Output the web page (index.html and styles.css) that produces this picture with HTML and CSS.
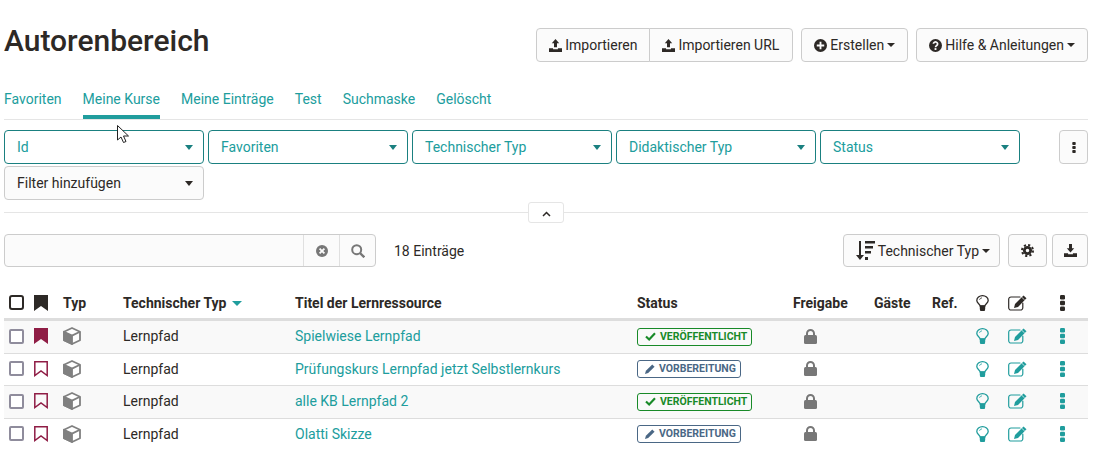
FILE: index.html
```html
<!DOCTYPE html>
<html lang="de">

<head>
  <meta charset="UTF-8">
  <title>Autorenbereich</title>
  <link rel="stylesheet" href="styles.css">
</head>

<body>
  <svg class="defs" width="0" height="0">
    <symbol id="i-upload" viewBox="0 0 14 14">
      <path fill="currentColor" d="M7 0l4 4.6H8.6V9H5.4V4.6H3zM0 10h4.4v1h5.2v-1H14v4H0z" />
    </symbol>
    <symbol id="i-download" viewBox="0 0 14 14">
      <path fill="currentColor" d="M5.4 0h3.2v4.6H11L7 9.2 3 4.6h2.4zM0 10h4.4v1h5.2v-1H14v4H0z" />
    </symbol>
    <symbol id="i-plus" viewBox="0 0 14 14">
      <path fill="currentColor" fill-rule="evenodd" d="M7 0a7 7 0 1 0 0 14A7 7 0 0 0 7 0zM3 6h3V3h2v3h3v2H8v3H6V8H3z" />
    </symbol>
    <symbol id="i-help" viewBox="0 0 14 14">
      <circle cx="7" cy="7" r="7" fill="currentColor" />
      <path fill="none" stroke="#fbfbfb" stroke-width="1.8" d="M4.7 5.2a2.3 2.1 0 1 1 3.6 1.8c-.9.6-1.3.9-1.3 1.9" />
      <rect x="6" y="9.8" width="2" height="2" fill="#fbfbfb" />
    </symbol>
    <symbol id="i-gear" viewBox="0 0 14 14">
      <circle cx="7" cy="7" r="3.4" fill="none" stroke="currentColor" stroke-width="3" />
      <circle cx="7" cy="7" r="5.9" fill="none" stroke="currentColor" stroke-width="2.2" stroke-dasharray="2.32 2.31" />
    </symbol>
    <symbol id="i-sort" viewBox="0 0 19 19">
      <path fill="currentColor" d="M3 0h2v14h3l-4 5-4-5h3zM9 0h10v2.500H9zM9 5h8v2.500H9zM9 10h6v2.500H9zM9 16h3v3H9z" />
    </symbol>
    <symbol id="i-bookmark" viewBox="0 0 14 16">
      <path fill="currentColor" d="M0 0h14v16l-7-5-7 5z" />
    </symbol>
    <symbol id="i-bookmark-o" viewBox="0 0 14 16">
      <path fill="none" stroke="currentColor" stroke-width="1.5" d="M.8.8h12.400v13.700L7 10 .8 14.500z" />
    </symbol>
    <symbol id="i-cube" viewBox="0 0 18 18">
      <path fill="#fff" stroke="#808080" stroke-width="1.800" stroke-linejoin="round" d="M9 1l8 3.700v8.600L9 17l-8-3.700V4.700z" />
      <path fill="#808080" stroke="#808080" stroke-width="1.800" stroke-linejoin="round" d="M1 4.700l8 3.900V17l-8-3.700z" />
      <path fill="none" stroke="#808080" stroke-width="1.800" d="M9 8.600l8-3.900" />
    </symbol>
    <symbol id="i-lock" viewBox="0 0 13 15">
      <path fill="none" stroke="currentColor" stroke-width="2" d="M3 7V4.500a3.500 3.500 0 0 1 7 0V7" />
      <rect y="6" width="13" height="9" rx="1.500" fill="currentColor" />
    </symbol>
    <symbol id="i-bulb" viewBox="0 0 13 16">
      <path fill="none" stroke="currentColor" stroke-width="1.300" d="M4.200 11C3.800 9 .8 8 .8 5.400a5.700 4.700 0 0 1 11.400 0C12.200 8 9.200 9 8.800 11z" />
      <path fill="currentColor" d="M3.800 10.500h5.400v3a2 2.500 0 0 1-5.400 0z" />
      <path fill="none" stroke="currentColor" stroke-width=".8" d="M3.500 4.800a3 2.500 0 0 1 2.500-2" />
    </symbol>
    <symbol id="i-edit" viewBox="0 0 19 16">
      <path fill="none" stroke="currentColor" stroke-width="1.200" stroke-linecap="round" d="M12 2H3A2.300 2.300 0 0 0 .7 4.300v8.400A2.300 2.300 0 0 0 3 15h9.500a2.300 2.300 0 0 0 2.300-2.300V8" />
      <path fill="currentColor" d="M15.500.5l3 2.700L10 12l-4 1 1-4z" />
      <path fill="none" stroke="#fff" stroke-width=".7" d="M13.800 2.300l2.900 2.700" />
    </symbol>
    <symbol id="i-dots" viewBox="0 0 5 16">
      <rect width="5" height="4.400" rx="1.200" fill="currentColor" />
      <rect y="5.800" width="5" height="4.400" rx="1.200" fill="currentColor" />
      <rect y="11.600" width="5" height="4.400" rx="1.200" fill="currentColor" />
    </symbol>
    <symbol id="i-check" viewBox="0 0 12 10">
      <path fill="none" stroke="currentColor" stroke-width="2.400" d="M1 5l3.500 3.300L11 1.500" />
    </symbol>
    <symbol id="i-pencil" viewBox="0 0 11 11">
      <path fill="currentColor" d="M8 .5L10.500 3 3.500 10 0 11l1-3.500z" />
    </symbol>
  </svg>

  <div class="page">
    <header class="top">
      <h1>Autorenbereich</h1>
      <div class="actions">
        <div class="btn-group">
          <button class="btn"><svg class="icon"><use href="#i-upload" /></svg>Importieren</button>
          <button class="btn"><svg class="icon"><use href="#i-upload" /></svg>Importieren URL</button>
        </div>
        <button class="btn"><svg class="icon"><use href="#i-plus" /></svg>Erstellen<span class="caret"></span></button>
        <button class="btn"><svg class="icon"><use href="#i-help" /></svg>Hilfe &amp; Anleitungen<span class="caret"></span></button>
      </div>
    </header>

    <nav class="tabs">
      <a>Favoriten</a>
      <a class="active">Meine Kurse</a>
      <a>Meine Einträge</a>
      <a>Test</a>
      <a>Suchmaske</a>
      <a>Gelöscht</a>
    </nav>

    <section class="filters">
      <div class="filter-grid">
        <button class="filter on">Id<span class="caret"></span></button>
        <button class="filter on">Favoriten<span class="caret"></span></button>
        <button class="filter on">Technischer Typ<span class="caret"></span></button>
        <button class="filter on">Didaktischer Typ<span class="caret"></span></button>
        <button class="filter on">Status<span class="caret"></span></button>
        <button class="filter">Filter hinzufügen<span class="caret"></span></button>
      </div>
      <button class="btn btn-kebab"><svg class="kebab"><use href="#i-dots" /></svg></button>
    </section>

    <div class="divider">
      <button class="collapse"><svg width="9" height="6" viewBox="0 0 9 6"><path fill="none" stroke="#2d2926" stroke-width="1.500" d="M1 5l3.500-3.500L8 5" /></svg></button>
    </div>

    <section class="toolbar">
      <div class="search">
        <div class="search-input"></div>
        <div class="search-btn">
          <svg width="14" height="14" viewBox="0 0 14 14">
            <circle cx="7" cy="7" r="6" fill="#777" />
            <path stroke="#fbfbfb" stroke-width="1.800" d="M4.600 4.600l4.800 4.800M9.400 4.600l-4.800 4.800" />
          </svg>
        </div>
        <div class="search-btn">
          <svg width="14" height="14" viewBox="0 0 14 14">
            <circle cx="5.700" cy="5.700" r="4.500" fill="none" stroke="#777" stroke-width="2" />
            <path stroke="#777" stroke-width="2.400" d="M9 9l4.300 4.300" />
          </svg>
        </div>
      </div>
      <span class="count">18 Einträge</span>
      <div class="tools">
        <button class="btn btn-sort"><svg class="icon-sort"><use href="#i-sort" /></svg>Technischer Typ<span class="caret"></span></button>
        <button class="btn btn-gear"><svg class="icon"><use href="#i-gear" /></svg></button>
        <button class="btn btn-export"><svg class="icon"><use href="#i-download" /></svg></button>
      </div>
    </section>

    <table class="results">
      <thead>
        <tr>
          <th class="c-check"><span class="box box-head"></span></th>
          <th class="c-mark"><svg class="i-mark"><use href="#i-bookmark" /></svg></th>
          <th class="c-type">Typ</th>
          <th class="c-tech">Technischer Typ <span class="caret caret-sort"></span></th>
          <th class="c-title">Titel der Lernressource</th>
          <th class="c-status">Status</th>
          <th class="c-share">Freigabe</th>
          <th class="c-guest">Gäste</th>
          <th class="c-ref">Ref.</th>
          <th class="c-bulb"><svg class="i-bulb"><use href="#i-bulb" /></svg></th>
          <th class="c-edit"><svg class="i-edit"><use href="#i-edit" /></svg></th>
          <th class="c-dots"><svg class="i-dots"><use href="#i-dots" /></svg></th>
        </tr>
      </thead>
      <tbody>
        <tr>
          <td><span class="box"></span></td>
          <td class="mark"><svg class="i-mark"><use href="#i-bookmark" /></svg></td>
          <td><svg class="i-cube"><use href="#i-cube" /></svg></td>
          <td>Lernpfad</td>
          <td><a>Spielwiese Lernpfad</a></td>
          <td><span class="tag tag-ok"><svg class="i-check"><use href="#i-check" /></svg>VERÖFFENTLICHT</span></td>
          <td class="lock"><svg class="i-lock"><use href="#i-lock" /></svg></td>
          <td></td>
          <td></td>
          <td class="act"><svg class="i-bulb"><use href="#i-bulb" /></svg></td>
          <td class="act"><svg class="i-edit"><use href="#i-edit" /></svg></td>
          <td class="act"><svg class="i-dots"><use href="#i-dots" /></svg></td>
        </tr>
        <tr>
          <td><span class="box"></span></td>
          <td class="mark"><svg class="i-mark"><use href="#i-bookmark-o" /></svg></td>
          <td><svg class="i-cube"><use href="#i-cube" /></svg></td>
          <td>Lernpfad</td>
          <td><a>Prüfungskurs Lernpfad jetzt Selbstlernkurs</a></td>
          <td><span class="tag tag-prep"><svg class="i-pencil"><use href="#i-pencil" /></svg>VORBEREITUNG</span></td>
          <td class="lock"><svg class="i-lock"><use href="#i-lock" /></svg></td>
          <td></td>
          <td></td>
          <td class="act"><svg class="i-bulb"><use href="#i-bulb" /></svg></td>
          <td class="act"><svg class="i-edit"><use href="#i-edit" /></svg></td>
          <td class="act"><svg class="i-dots"><use href="#i-dots" /></svg></td>
        </tr>
        <tr>
          <td><span class="box"></span></td>
          <td class="mark"><svg class="i-mark"><use href="#i-bookmark-o" /></svg></td>
          <td><svg class="i-cube"><use href="#i-cube" /></svg></td>
          <td>Lernpfad</td>
          <td><a>alle KB Lernpfad 2</a></td>
          <td><span class="tag tag-ok"><svg class="i-check"><use href="#i-check" /></svg>VERÖFFENTLICHT</span></td>
          <td class="lock"><svg class="i-lock"><use href="#i-lock" /></svg></td>
          <td></td>
          <td></td>
          <td class="act"><svg class="i-bulb"><use href="#i-bulb" /></svg></td>
          <td class="act"><svg class="i-edit"><use href="#i-edit" /></svg></td>
          <td class="act"><svg class="i-dots"><use href="#i-dots" /></svg></td>
        </tr>
        <tr>
          <td><span class="box"></span></td>
          <td class="mark"><svg class="i-mark"><use href="#i-bookmark-o" /></svg></td>
          <td><svg class="i-cube"><use href="#i-cube" /></svg></td>
          <td>Lernpfad</td>
          <td><a>Olatti Skizze</a></td>
          <td><span class="tag tag-prep"><svg class="i-pencil"><use href="#i-pencil" /></svg>VORBEREITUNG</span></td>
          <td class="lock"><svg class="i-lock"><use href="#i-lock" /></svg></td>
          <td></td>
          <td></td>
          <td class="act"><svg class="i-bulb"><use href="#i-bulb" /></svg></td>
          <td class="act"><svg class="i-edit"><use href="#i-edit" /></svg></td>
          <td class="act"><svg class="i-dots"><use href="#i-dots" /></svg></td>
        </tr>
      </tbody>
    </table>
  </div>

  <!-- mouse pointer caught in the screenshot -->
  <svg class="cursor" width="13" height="19" viewBox="0 0 13 19">
    <path fill="#fff" stroke="#222" stroke-width="1" d="M.5.500v14.500l3.500-3 2.500 5.500 2.500-1-2.500-5.500h5z" />
  </svg>
</body>

</html>
```

FILE: styles.css
```css
html,
body {
  height: 100%;
  margin: 0;
  overflow: hidden;
}

body {
  background-color: #fff;
  color: #2d2926;
  font-family: Roboto, sans-serif;
  font-size: 14px;
  line-height: 20px;
}

.defs {
  position: absolute;
}

.page {
  padding: 24px 11px 0 4px;
}

.top {
  display: flex;
  justify-content: space-between;
  align-items: flex-start;
}

h1 {
  margin: 0;
  font-size: 30px;
  font-weight: 500;
  line-height: 34px;
}

.actions {
  display: flex;
  gap: 8px;
  margin-top: 4px;
}

.btn {
  display: inline-flex;
  align-items: center;
  height: 34px;
  padding: 0 12px;
  border: 1px solid #ccc;
  border-radius: 4px;
  background-color: #fbfbfb;
  color: #2d2926;
  font-family: inherit;
  font-size: 14px;
}

.btn-group {
  display: flex;
}

.btn-group .btn:first-child {
  border-radius: 4px 0 0 4px;
}

.btn-group .btn:last-child {
  margin-left: -1px;
  padding-right: 13px;
  border-radius: 0 4px 4px 0;
}

.icon {
  width: 13px;
  height: 13px;
  margin-right: 3px;
  flex: none;
}

.caret {
  display: inline-block;
  width: 0;
  height: 0;
  border-top: 4px solid currentColor;
  border-left: 4px solid transparent;
  border-right: 4px solid transparent;
}

.btn .caret {
  margin-left: 3px;
}

.tabs {
  display: flex;
  gap: 21px;
  margin-top: 27px;
  border-bottom: 1px solid #e5e5e5;
  color: #209d9d;
}

.tabs a {
  padding-bottom: 6px;
  border-bottom: 4px solid transparent;
}

.tabs a.active {
  border-bottom-color: #209d9d;
}

.filters {
  display: flex;
  justify-content: space-between;
  align-items: flex-start;
  margin-top: 10px;
}

.filter-grid {
  display: grid;
  grid-template-columns: repeat(5, 200px);
  gap: 2px 4px;
}

.filter {
  display: flex;
  justify-content: space-between;
  align-items: center;
  height: 34px;
  padding: 0 10px 0 12px;
  border: 1px solid #ccc;
  border-radius: 4px;
  background-color: #fbfbfb;
  color: #2d2926;
  font-family: inherit;
  font-size: 14px;
}

.filter .caret {
  border-top-width: 5px;
  border-left-width: 4.5px;
  border-right-width: 4.5px;
}

.filter.on {
  border-color: #1a8080;
  background-color: #fff;
  color: #209d9d;
}

.filter.on .caret {
  border-top-color: #1a8080;
}

.btn-kebab {
  width: 29px;
  padding: 0;
  justify-content: center;
}

.kebab {
  width: 4px;
  height: 11px;
}

.divider {
  position: relative;
  height: 1px;
  margin-top: 12px;
  background-color: #e5e5e5;
}

.collapse {
  position: absolute;
  left: 524px;
  top: -10px;
  width: 36px;
  height: 21px;
  padding: 0;
  border: 1px solid #e5e5e5;
  border-radius: 3px;
  background-color: #fff;
}

.toolbar {
  display: flex;
  align-items: center;
  margin-top: 21px;
}

.search {
  display: flex;
  width: 372px;
  height: 33px;
  box-sizing: border-box;
  border: 1px solid #ccc;
  border-radius: 4px;
  background-color: #fbfbfb;
}

.search-input {
  flex: 1;
}

.search-btn {
  display: flex;
  justify-content: center;
  align-items: center;
  width: 35px;
  border-left: 1px solid #e0e0e0;
}

.count {
  margin-left: 18px;
}

.tools {
  display: flex;
  gap: 5px;
  margin-left: auto;
}

.tools .btn {
  height: 33px;
}

.btn-sort {
  margin-right: 3px;
  padding-right: 9px;
}

.icon-sort {
  width: 19px;
  height: 19px;
  margin-right: 3px;
}

.btn-gear,
.btn-export {
  justify-content: center;
  padding: 0;
}

.btn-gear {
  width: 39px;
}

.btn-export {
  width: 36px;
}

.btn-gear .icon,
.btn-export .icon {
  margin: 0;
}

.results {
  width: 100%;
  margin-top: 20px;
  border-collapse: collapse;
  table-layout: fixed;
}

.results th,
.results td {
  padding: 0 0 0 4px;
  text-align: left;
  vertical-align: middle;
}

.results th {
  height: 31px;
  border-bottom: 3px solid #ddd;
  font-weight: 700;
  white-space: nowrap;
}

.results td {
  height: 30.5px;
  padding-bottom: 1px;
  border-bottom: 1px solid #ddd;
}

.results tbody tr:nth-child(odd) {
  background-color: #f9f9f9;
}

.results a {
  color: #209d9d;
}

.results svg,
.box {
  display: block;
}

.c-check { width: 21px; }
.c-mark { width: 25px; }
.c-type { width: 56px; }
.c-tech { width: 168px; }
.c-title { width: 338px; }
.c-status { width: 152px; }
.c-share { width: 77px; }
.c-guest { width: 54px; }
.c-ref { width: 40px; }
.c-bulb { width: 28px; }
.c-edit { width: 48px; }

.results .c-check,
.results td:first-child {
  padding-left: 5px;
}

.box {
  width: 15px;
  height: 15px;
  box-sizing: border-box;
  border: 2px solid #8f8c9c;
  border-radius: 2px;
  background-color: #fff;
}

.box-head {
  border-color: #2d2926;
  border-radius: 3px;
}

.i-mark {
  width: 14px;
  height: 16px;
}

.mark {
  color: #8f1d45;
}

.i-cube {
  width: 18px;
  height: 18px;
}

.caret-sort {
  margin-left: 2px;
  border-top: 5px solid #209d9d;
  border-left-width: 5px;
  border-right-width: 5px;
  vertical-align: middle;
}

.tag {
  display: inline-flex;
  align-items: center;
  height: 16px;
  padding: 0 4px 0 7px;
  border: 1px solid currentColor;
  border-radius: 3px;
  font-size: 10.5px;
  font-weight: 700;
  line-height: 14px;
}

.tag svg {
  margin-right: 4px;
}

.tag-ok {
  color: #188a28;
}

.tag-prep {
  color: #4a6785;
}

.i-check {
  width: 11px;
  height: 9px;
}

.i-pencil {
  width: 10px;
  height: 10px;
}

.lock {
  padding-left: 15px !important;
  color: #777;
}

.i-lock {
  width: 13px;
  height: 15px;
}

.i-bulb {
  width: 13px;
  height: 16px;
}

.i-edit {
  width: 19px;
  height: 16px;
}

.i-dots {
  width: 5px;
  height: 16px;
}

.act {
  color: #209d9d;
}

.cursor {
  position: absolute;
  left: 117px;
  top: 125px;
}
```
